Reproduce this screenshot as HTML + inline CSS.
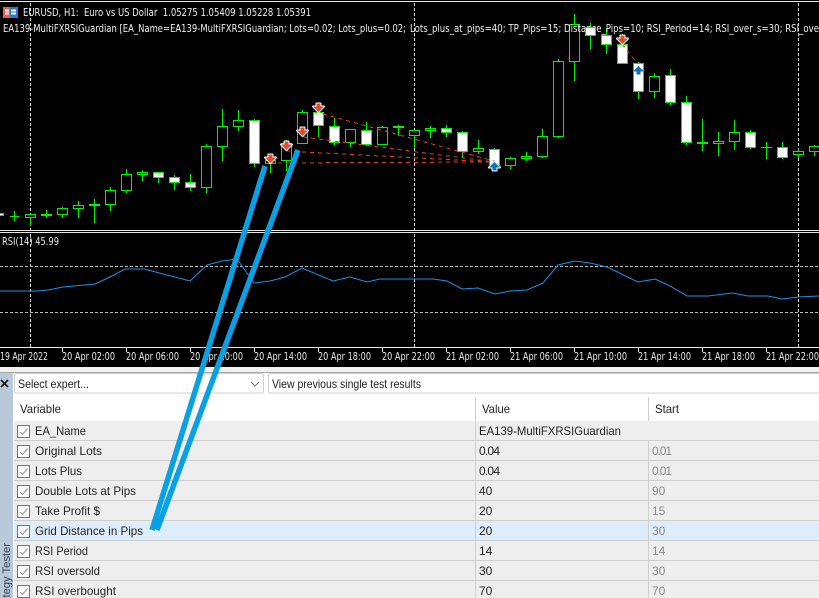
<!DOCTYPE html>
<html><head><meta charset="utf-8"><style>
html,body{margin:0;padding:0;background:#000;width:819px;height:598px;overflow:hidden}
svg{display:block;font-family:"Liberation Sans",sans-serif}
.h{fill:#000;stroke:#00f000;width:10px}
.w{fill:#fff;stroke:#00f000;width:10px}
.t{fill:#eee;font-size:10.5px;font-family:"DejaVu Sans",sans-serif}
.a{fill:#e6e6e6;font-size:10.5px;font-family:"DejaVu Sans",sans-serif}
.u{fill:#222;font-size:12px}
.g{fill:#8a8a8a;font-size:12px}
.ck{fill:#fff;stroke:#2f86c8}
</style></head><body>
<svg width="819" height="598" viewBox="0 0 819 598" xmlns="http://www.w3.org/2000/svg">
<rect width="819" height="598" fill="#000"/>
<path d="M0 1.5H819M0 230.5H819M0 232.5H819" stroke="#e8e8e8" fill="none"/>

<!-- grid verticals -->
<path d="M30.5 3V230M414.5 3V230M798.5 3V230M30.5 234V347M414.5 234V347M798.5 234V347" stroke="#ddd" stroke-dasharray="3 2" fill="none"/>
<path d="M0 266.5H819M0 312.5H819" stroke="#bbb" stroke-dasharray="3 2" fill="none"/>

<!-- wicks -->
<path stroke="#00f000" fill="none" d="M14.5 211V221M30.5 214V226M46.5 210V218M62.5 207V218M78.5 201V218M94.5 199V223M110.5 187V211M126.5 169V193M142.5 170V181M158.5 172V183M174.5 175V190M190.5 174V191M206.5 144V193M222.5 109V161M238.5 110V131M254.5 119V167M270.5 159V173M286.5 140V171M302.5 110V144M318.5 107V137M334.5 118V145M350.5 129V147M366.5 122V146M382.5 126V145M398.5 125V136M414.5 130V148M430.5 126V138M446.5 125V137M462.5 131V158M478.5 140V154M494.5 148V166M510.5 157V169M526.5 152V161M542.5 129V158M558.5 59V138M574.5 14V81M590.5 23V49M606.5 28V54M622.5 34V64M638.5 62V99M654.5 73V98M670.5 69V105M686.5 96V145M702.5 119V151M718.5 132V156M734.5 120V150M750.5 130V149M766.5 142V159M782.5 142V159M798.5 149V158M814.5 145V156"/>
<path stroke="#00f000" fill="none" d="M10 216.5H19"/>
<path stroke="#00f000" stroke-width="2" fill="none" d="M41 215H52M89 205H100M393 127H404M697 143H708"/>
<path stroke="#00f000" fill="none" d="M761 147.5H772"/>

<!-- hollow bodies -->
<g class="hg">
<rect class="h" x="25.5" y="214.5" height="3"/>
<rect class="h" x="57.5" y="208.5" height="6"/>
<rect class="h" x="73.5" y="205.5" height="3"/>
<rect class="h" x="105.5" y="190.5" height="14"/>
<rect class="h" x="121.5" y="174.5" height="16"/>
<rect class="h" x="137.5" y="172.5" height="2"/>
<rect class="h" x="201.5" y="146.5" height="41"/>
<rect class="h" x="217.5" y="126.5" height="20"/>
<rect class="h" x="233.5" y="120.5" height="6"/>
<rect class="h" x="265.5" y="160.5" height="3"/>
<rect class="h" x="281.5" y="143.5" height="17"/>
<rect class="h" x="297.5" y="112.5" height="31"/>
<rect class="h" x="345.5" y="129.5" height="13"/>
<rect class="h" x="377.5" y="127.5" height="17"/>
<rect class="h" x="409.5" y="130.5" height="5"/>
<rect class="h" x="425.5" y="128.5" height="2"/>
<rect class="h" x="473.5" y="148.5" height="3"/>
<rect class="h" x="505.5" y="158.5" height="7"/>
<rect class="h" x="521.5" y="156.5" height="2"/>
<rect class="h" x="537.5" y="136.5" height="20"/>
<rect class="h" x="553.5" y="61.5" height="75"/>
<rect class="h" x="569.5" y="24.5" height="37"/>
<rect class="h" x="649.5" y="76.5" height="15"/>
<rect class="h" x="713.5" y="141.5" height="2"/>
<rect class="h" x="729.5" y="132.5" height="9"/>
<rect class="h" x="793.5" y="151.5" height="3"/>
<rect class="h" x="809.5" y="146.5" height="5"/>
</g>

<!-- chart text -->
<text class="t" x="23" y="16" textLength="288" lengthAdjust="spacingAndGlyphs" xml:space="preserve">EURUSD, H1:  Euro vs US Dollar  1.05275 1.05409 1.05228 1.05391</text>
<text class="t" x="3" y="32" textLength="403" lengthAdjust="spacingAndGlyphs">EA139-MultiFXRSIGuardian [EA_Name=EA139-MultiFXRSIGuardian; Lots=0.02; Lots_plus=0.02;</text>
<text class="t" x="410" y="32" textLength="409" lengthAdjust="spacingAndGlyphs">Lots_plus_at_pips=40; TP_Pips=15; Distance_Pips=10; RSI_Period=14; RSI_over_s=30; RSI_ove</text>

<!-- chart icon -->
<rect x="3" y="7" width="7" height="11" fill="#e8604c"/>
<rect x="10" y="7" width="8" height="11" fill="#2a78c4"/>
<path d="M5 10.5h4M5 13.5h4M11 10.5h5M11 13.5h5" stroke="#fff" stroke-width="2" fill="none"/>

<!-- white bodies -->
<rect class="w" x="-6.5" y="213.5" height="2"/>
<rect class="w" x="153.5" y="172.5" height="5"/>
<rect class="w" x="169.5" y="177.5" height="5"/>
<rect class="w" x="185.5" y="182.5" height="5"/>
<rect class="w" x="249.5" y="120.5" height="43"/>
<rect class="w" x="313.5" y="112.5" height="13"/>
<rect class="w" x="329.5" y="126.5" height="16"/>
<rect class="w" x="361.5" y="130.5" height="14"/>
<rect class="w" x="441.5" y="128.5" height="4"/>
<rect class="w" x="457.5" y="132.5" height="19"/>
<rect class="w" x="489.5" y="149.5" height="15"/>
<rect class="w" x="585.5" y="27.5" height="8"/>
<rect class="w" x="601.5" y="35.5" height="9"/>
<rect class="w" x="617.5" y="44.5" height="19"/>
<rect class="w" x="633.5" y="63.5" height="28"/>
<rect class="w" x="665.5" y="75.5" height="27"/>
<rect class="w" x="681.5" y="102.5" height="40"/>
<rect class="w" x="745.5" y="132.5" height="15"/>
<rect class="w" x="777.5" y="147.5" height="10"/>

<!-- trade lines -->
<g stroke="#e23a1c" fill="none" stroke-dasharray="4 4" shape-rendering="crispEdges">
<path d="M323 114L494 161"/>
<path d="M303 137L494 162"/>
<path d="M286 151L494 162"/>
<path d="M270 163L494 162"/>
<path d="M622 44L638 64"/>
</g>

<!-- arrows -->
<g fill="#e5492c" stroke="#fff" stroke-width="2" paint-order="stroke" stroke-linejoin="round">
<path d="M268.5 154.5h4v3h3.500l-5.500 5.500-5.500-5.500h3.500z"/>
<path d="M284.500 141.500h4v3h3.500l-5.500 5.500-5.500-5.500h3.500z"/>
<path d="M300.500 127.500h4v3h3.500l-5.500 5.500-5.500-5.500h3.500z"/>
<path d="M316.500 103.500h4v3h3.500l-5.500 5.500-5.500-5.500h3.500z"/>
<path d="M620.500 35.500h4v3h3.500l-5.500 5.500-5.500-5.500h3.500z"/>
</g>
<g fill="#1470bc" stroke-linejoin="round">
<path stroke="#fff" stroke-width="2" paint-order="stroke" d="M492.500 170.500h4v-3h3.500l-5.500-5.500-5.500 5.500h3.500z"/>
<path d="M636.500 74.500h4v-3h3.500l-5.500-5.500-5.500 5.500h3.500z"/>
</g>

<!-- RSI -->
<text class="a" x="2" y="245" textLength="57" lengthAdjust="spacingAndGlyphs">RSI(14) 45.99</text>
<polyline fill="none" stroke="#1e90e6" stroke-width="1" points="0,291 37,291 48,290 63,287 95,284 110,277 125,269 144,269 190,281 207,265 222,261 237,259 254,283 270,281 285,277 302,268 333,281 350,277 367,282 380,279 410,279 433,279 447,281 462,289 478,288 495,294 510,291 527,290 543,283 558,265 575,261 590,263 607,267 638,282 655,279 670,286 687,296 708,296 732,293 748,296 768,296 782,299 798,297 819,296"/>

<!-- axis -->
<path d="M0 347.5H819" stroke="#e8e8e8"/>
<path stroke="#e8e8e8" fill="none" d="M62.5 348v4M126.5 348v4M190.5 348v4M254.5 348v4M318.5 348v4M382.5 348v4M446.5 348v4M510.5 348v4M574.5 348v4M638.5 348v4M702.5 348v4M766.5 348v4"/>
<g class="a">
<text class="a" x="0" y="360" textLength="48" lengthAdjust="spacingAndGlyphs">19 Apr 2022</text>
<text class="a" x="62" y="360" textLength="53" lengthAdjust="spacingAndGlyphs">20 Apr 02:00</text>
<text class="a" x="126" y="360" textLength="53" lengthAdjust="spacingAndGlyphs">20 Apr 06:00</text>
<text class="a" x="190" y="360" textLength="53" lengthAdjust="spacingAndGlyphs">20 Apr 10:00</text>
<text class="a" x="254" y="360" textLength="53" lengthAdjust="spacingAndGlyphs">20 Apr 14:00</text>
<text class="a" x="318" y="360" textLength="53" lengthAdjust="spacingAndGlyphs">20 Apr 18:00</text>
<text class="a" x="382" y="360" textLength="53" lengthAdjust="spacingAndGlyphs">20 Apr 22:00</text>
<text class="a" x="446" y="360" textLength="53" lengthAdjust="spacingAndGlyphs">21 Apr 02:00</text>
<text class="a" x="510" y="360" textLength="53" lengthAdjust="spacingAndGlyphs">21 Apr 06:00</text>
<text class="a" x="574" y="360" textLength="53" lengthAdjust="spacingAndGlyphs">21 Apr 10:00</text>
<text class="a" x="638" y="360" textLength="53" lengthAdjust="spacingAndGlyphs">21 Apr 14:00</text>
<text class="a" x="702" y="360" textLength="53" lengthAdjust="spacingAndGlyphs">21 Apr 18:00</text>
<text class="a" x="766" y="360" textLength="53" lengthAdjust="spacingAndGlyphs">21 Apr 22:00</text>
</g>

<!-- tester panel -->
<rect x="0" y="367" width="819" height="231" fill="#f0f0f0"/>
<rect x="0" y="372" width="819" height="1" fill="#a8a8a8"/>
<rect x="0" y="373" width="13" height="225" fill="#b9c9da"/>
<rect x="13" y="373" width="806" height="225" fill="#fff"/>
<path d="M1 380l7 7M8 380l-7 7" stroke="#111" stroke-width="1.6" fill="none"/>
<rect x="14.5" y="373.5" width="249" height="19.5" rx="2" fill="#fff" stroke="#d0d0d0"/>
<rect x="268.5" y="373.5" width="560" height="19.5" rx="2" fill="#fff" stroke="#d0d0d0"/>
<path d="M251 382l4 4 4-4" stroke="#777" fill="none"/>
<text class="u" x="18" y="388" textLength="71" lengthAdjust="spacingAndGlyphs">Select expert...</text>
<text class="u" x="272" y="388" textLength="149" lengthAdjust="spacingAndGlyphs">View previous single test results</text>

<!-- table -->
<rect x="14" y="421" width="805" height="177" fill="#eee"/>
<rect x="14" y="521" width="805" height="19" fill="#deedfb"/>
<path stroke="#cfcfcf" fill="none" d="M14 440.5H819M14 460.5H819M14 480.5H819M14 500.5H819M14 520.5H819M14 540.5H819M14 560.5H819M14 580.5H819M475.5 397V598M648.5 397V421M648.5 441V598"/>
<text class="u" x="20" y="413" textLength="41" lengthAdjust="spacingAndGlyphs">Variable</text>
<text class="u" x="482" y="413" textLength="28" lengthAdjust="spacingAndGlyphs">Value</text>
<text class="u" x="655" y="413" textLength="24" lengthAdjust="spacingAndGlyphs">Start</text>

<g>
<rect class="ck" x="17.5" y="425.5" width="12" height="12"/>
<rect class="ck" x="17.5" y="445.5" width="12" height="12"/>
<rect class="ck" x="17.5" y="465.5" width="12" height="12"/>
<rect class="ck" x="17.5" y="485.5" width="12" height="12"/>
<rect class="ck" x="17.5" y="505.5" width="12" height="12"/>
<rect class="ck" x="17.5" y="525.5" width="12" height="12"/>
<rect class="ck" x="17.5" y="545.5" width="12" height="12"/>
<rect class="ck" x="17.5" y="565.5" width="12" height="12"/>
<rect class="ck" x="17.5" y="585.5" width="12" height="12"/>
</g>
<path stroke="#9a9a9a" stroke-width="1.1" fill="none" d="M20 432l2.5 2.5 5-6M20 452l2.5 2.5 5-6M20 472l2.5 2.5 5-6M20 492l2.5 2.5 5-6M20 512l2.5 2.5 5-6M20 532l2.5 2.5 5-6M20 552l2.5 2.5 5-6M20 572l2.5 2.5 5-6M20 592l2.5 2.5 5-6"/>

<text class="u" x="35" y="435" textLength="51" lengthAdjust="spacingAndGlyphs">EA_Name</text>
<text class="u" x="35" y="455" textLength="67" lengthAdjust="spacingAndGlyphs">Original Lots</text>
<text class="u" x="35" y="475" textLength="47" lengthAdjust="spacingAndGlyphs">Lots Plus</text>
<text class="u" x="35" y="495" textLength="101" lengthAdjust="spacingAndGlyphs">Double Lots at Pips</text>
<text class="u" x="35" y="515" textLength="65" lengthAdjust="spacingAndGlyphs">Take Profit $</text>
<text class="u" x="35" y="535" textLength="108" lengthAdjust="spacingAndGlyphs">Grid Distance in Pips</text>
<text class="u" x="35" y="555" textLength="53" lengthAdjust="spacingAndGlyphs">RSI Period</text>
<text class="u" x="35" y="575" textLength="65" lengthAdjust="spacingAndGlyphs">RSI oversold</text>
<text class="u" x="35" y="595" textLength="81" lengthAdjust="spacingAndGlyphs">RSI overbought</text>

<text class="u" x="479" y="435" textLength="142" lengthAdjust="spacingAndGlyphs">EA139-MultiFXRSIGuardian</text>
<text class="u" x="479" y="455" textLength="21" lengthAdjust="spacing">0.04</text>
<text class="u" x="479" y="475" textLength="21" lengthAdjust="spacing">0.04</text>
<text class="u" x="479" y="495">40</text>
<text class="u" x="479" y="515">20</text>
<text class="u" x="479" y="535">20</text>
<text class="u" x="479" y="555">14</text>
<text class="u" x="479" y="575">30</text>
<text class="u" x="479" y="595">70</text>

<text class="g" x="652" y="455" textLength="20" lengthAdjust="spacing">0.01</text>
<text class="g" x="652" y="475" textLength="20" lengthAdjust="spacing">0.01</text>
<text class="g" x="652" y="495">90</text>
<text class="g" x="652" y="515">15</text>
<text class="g" x="652" y="535">30</text>
<text class="g" x="652" y="555">14</text>
<text class="g" x="652" y="575">30</text>
<text class="g" x="652" y="595">70</text>

<text transform="translate(10,598) rotate(-90)" x="55" y="0" font-size="11.2" fill="#33455c" text-anchor="end">Strategy Tester</text>

<!-- annotation strokes -->
<g stroke="#0aa0e4" stroke-width="5.500" fill="none" stroke-linecap="butt">
<path d="M265 166L152 530"/>
<path d="M298 150L157 530"/>
</g>
</svg>
</body></html>
